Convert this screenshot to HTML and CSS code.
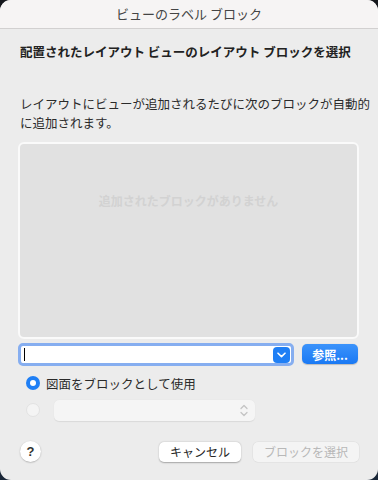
FILE: index.html
```html
<!DOCTYPE html>
<html lang="ja">
<head>
    <meta charset="UTF-8">
    <meta name="viewport" content="width=device-width, initial-scale=1.0">
    <title>ビューのラベル ブロック</title>
    <link rel="stylesheet" href="styles.css">
</head>
<body>
    <div class="window">
        <div class="titlebar">ビューのラベル ブロック</div>
        <div class="content">
            <h1 class="heading">配置されたレイアウト ビューのレイアウト ブロックを選択</h1>
            <p class="desc">レイアウトにビューが追加されるたびに次のブロックが自動的<br>に追加されます。</p>

            <div class="listbox">
                <span class="empty">追加されたブロックがありません</span>
            </div>

            <div class="combo-row">
                <div class="combo">
                    <span class="caret"></span>
                    <span class="combo-btn">
                        <svg width="9" height="6" viewBox="0 0 9 6"><path d="M1 1.2 L4.5 4.6 L8 1.2" fill="none" stroke="#fff" stroke-width="1.6" stroke-linecap="round" stroke-linejoin="round"/></svg>
                    </span>
                </div>
                <button class="btn-blue">参照...</button>
            </div>

            <div class="radio-row first">
                <span class="radio on"></span>
                <label>図面をブロックとして使用</label>
            </div>
            <div class="radio-row">
                <span class="radio off"></span>
                <div class="popup">
                    <svg width="8" height="13" viewBox="0 0 8 13"><path d="M1 4.5 L4 1.5 L7 4.5 M1 8.5 L4 11.5 L7 8.5" fill="none" stroke="#c4c4c4" stroke-width="1.3" stroke-linecap="round" stroke-linejoin="round"/></svg>
                </div>
            </div>

            <div class="footer">
                <span class="help">?</span>
                <div class="actions">
                    <button class="btn">キャンセル</button>
                    <button class="btn disabled">ブロックを選択</button>
                </div>
            </div>
        </div>
    </div>
</body>
</html>
```

FILE: styles.css
```css
* {
    box-sizing: border-box;
}
body {
    margin: 0;
    background: linear-gradient(180deg, #15171c 0%, #1a2738 100%);
    font-family: "Noto Sans CJK JP", "Noto Sans", sans-serif;
    color: #262626;
}
.window {
    width: 378px;
    height: 480px;
    background-color: #ececec;
    border-radius: 11px;
    overflow: hidden;
}
.titlebar {
    height: 29px;
    background-color: #f6f4f4;
    border-bottom: 1px solid #d2d0d0;
    text-align: center;
    font-size: 13px;
    line-height: 27px;
    color: #444;
}
.content {
    padding: 0 19px 0 18px;
}
.heading {
    margin: 14px 0 0 2px;
    font-size: 12.5px;
    font-weight: bold;
    line-height: 18px;
    color: #222;
}
.desc {
    margin: 33px 0 0 2px;
    font-size: 12.5px;
    line-height: 19px;
    color: #2a2a2a;
    white-space: nowrap;
}
.listbox {
    margin-top: 10px;
    height: 197px;
    background-color: #e1e1e1;
    border: 2px solid #fafafa;
    border-radius: 6px;
    display: flex;
    align-items: flex-start;
    justify-content: center;
    padding-top: 48px;
}
.empty {
    font-size: 12px;
    font-weight: bold;
    color: #d2d2d2;
}
.combo-row {
    margin-top: 4px;
    display: flex;
    align-items: flex-start;
    gap: 8px;
}
.combo {
    width: 276px;
    height: 23px;
    background-color: #fff;
    border: 3px solid #86aef0;
    border-radius: 5px;
    display: flex;
    align-items: center;
    justify-content: space-between;
    padding: 0 1px 0 3px;
}
.caret {
    width: 1px;
    height: 13px;
    background-color: #000;
}
.combo-btn {
    width: 17px;
    height: 16px;
    background-color: #1f7ff5;
    border-radius: 4px;
    display: flex;
    align-items: center;
    justify-content: center;
}
.btn-blue {
    width: 56px;
    height: 20px;
    margin-top: 1px;
    border: none;
    border-radius: 5px;
    background: linear-gradient(180deg, #3b93fb, #1a79f4);
    color: #fff;
    font-family: inherit;
    font-size: 12px;
    font-weight: bold;
    padding: 0;
    box-shadow: 0 0.5px 1px rgba(0, 0, 0, 0.2);
}
.radio-row {
    display: flex;
    align-items: center;
    margin-left: 8px;
    height: 22px;
    margin-top: 5px;
}
.radio-row.first {
    margin-top: 6px;
}
.radio {
    width: 14px;
    height: 14px;
    border-radius: 50%;
    flex: none;
}
.radio.on {
    background-color: #1f7ff5;
    display: flex;
    align-items: center;
    justify-content: center;
}
.radio.on::after {
    content: "";
    width: 6px;
    height: 6px;
    border-radius: 50%;
    background-color: #fff;
}
.radio.off {
    background-color: #f4f4f4;
    border: 1px solid #e2e2e2;
}
.radio-row label {
    margin-left: 6px;
    font-size: 12.5px;
    color: #2a2a2a;
}
.popup {
    margin-left: 14px;
    width: 201px;
    height: 21px;
    background-color: #f5f5f5;
    border-radius: 5px;
    box-shadow: 0 0.5px 1px rgba(0, 0, 0, 0.08);
    display: flex;
    align-items: center;
    justify-content: flex-end;
    padding-right: 7px;
}
.footer {
    margin-top: 20px;
    display: flex;
    align-items: center;
    justify-content: space-between;
    padding-left: 2px;
}
.help {
    width: 21px;
    height: 21px;
    border-radius: 50%;
    background-color: #fff;
    box-shadow: 0 0.5px 1.5px rgba(0, 0, 0, 0.3);
    display: flex;
    align-items: center;
    justify-content: center;
    font-family: "Liberation Sans", sans-serif;
    font-size: 13px;
    font-weight: bold;
    color: #333;
}
.actions {
    display: flex;
    gap: 12px;
}
.btn {
    height: 20px;
    border: none;
    border-radius: 5px;
    background-color: #fff;
    box-shadow: 0 0.5px 1.5px rgba(0, 0, 0, 0.3);
    font-family: inherit;
    font-size: 12px;
    color: #262626;
    padding: 0;
    width: 82px;
}
.btn.disabled {
    width: 106px;
    background-color: #f4f4f4;
    color: #b8b8b8;
    box-shadow: 0 0 0 0.5px #dcdcdc;
}
```
